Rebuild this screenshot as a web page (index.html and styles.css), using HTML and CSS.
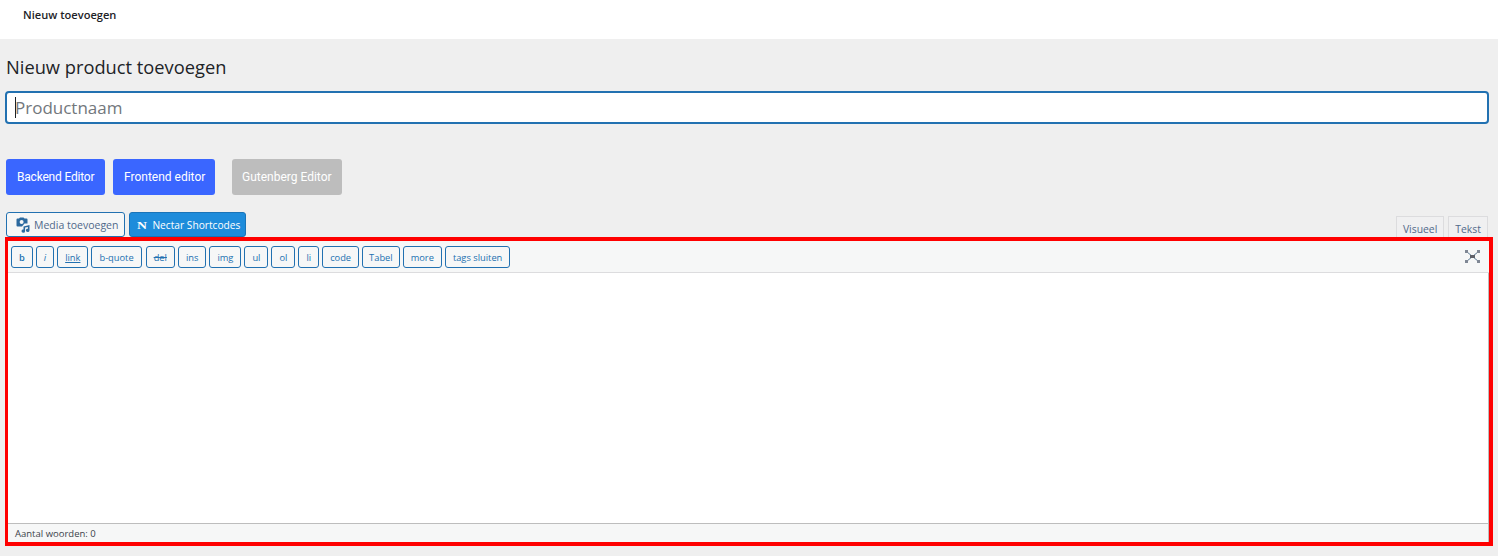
FILE: index.html
```html
<!DOCTYPE html>
<html lang="en">
  <head>
    <meta charset="UTF-8" />
    <title>Nieuw product toevoegen</title>
    <link rel="stylesheet" href="styles.css">
  </head>
  <body>
    <div class="topbar">Nieuw toevoegen</div>
    <div class="wrap">
      <h1 class="page-title">Nieuw product toevoegen</h1>
      <div class="title-input"><span class="caret"></span>Productnaam</div>

      <div class="builder-buttons">
        <a class="builder-btn builder-btn-back">Backend Editor</a>
        <a class="builder-btn builder-btn-front">Frontend editor</a>
        <a class="builder-btn builder-btn-off">Gutenberg Editor</a>
      </div>

      <div class="editor-tools">
        <div class="media-buttons">
          <a class="media-btn">
            <svg class="media-icon" width="16" height="16" viewBox="0 0 16 16">
              <path d="M2.5 1.5h1.5l1-1h3.5l1 1h2a1 1 0 0 1 1 1v4H9.5L7 9.5H2.5a1 1 0 0 1-1-1v-6a1 1 0 0 1 1-1z" fill="#2c6a9f"/>
              <circle cx="6.6" cy="5" r="2" fill="#f6f7f7"/>
              <path d="M8.5 9.5l6-1.5v5.4a1.8 1.6 0 1 1-1.6-1.6V9.9l-2.8.7v3.6a1.8 1.6 0 1 1-1.6-1.6z" fill="#2c6a9f"/>
            </svg>
            Media toevoegen
          </a>
          <a class="media-btn media-btn-nectar"><span class="nectar-n">N</span>Nectar Shortcodes</a>
        </div>
        <div class="editor-tabs">
          <a class="editor-tab">Visueel</a>
          <a class="editor-tab">Tekst</a>
        </div>
      </div>

      <div class="editor-frame">
        <div class="quicktags">
          <a class="qt qt-bold">b</a>
          <a class="qt qt-italic">i</a>
          <a class="qt qt-link">link</a>
          <a class="qt">b-quote</a>
          <a class="qt qt-del">del</a>
          <a class="qt">ins</a>
          <a class="qt">img</a>
          <a class="qt">ul</a>
          <a class="qt">ol</a>
          <a class="qt">li</a>
          <a class="qt">code</a>
          <a class="qt qt-table">Tabel</a>
          <a class="qt">more</a>
          <a class="qt">tags sluiten</a>
          <svg class="fullscreen" width="15" height="13" viewBox="0 0 15 13">
            <path d="M1.5 1.5L13.5 11.5M13.5 1.5L1.5 11.5" stroke="#5b7a94" stroke-width="1"/>
            <rect x="0" y="0" width="3" height="3" fill="#7f8794"/>
            <rect x="12" y="0" width="3" height="3" fill="#7f8794"/>
            <rect x="0" y="10" width="3" height="3" fill="#7f8794"/>
            <rect x="12" y="10" width="3" height="3" fill="#7f8794"/>
            <rect x="5" y="5" width="5" height="3" fill="#5f6169"/>
          </svg>
        </div>
        <div class="editor-area"></div>
        <div class="status-bar">Aantal woorden: 0</div>
      </div>
    </div>
  </body>
</html>
```

FILE: styles.css
```css
body {
  margin: 0;
  background: #efefef;
  font-family: "Open Sans", "Noto Sans", sans-serif;
  color: #1d2327;
}
a {
  display: block;
  text-decoration: none;
}

.topbar {
  height: 39px;
  padding: 7px 0 0 23px;
  box-sizing: border-box;
  background: #fff;
  font-size: 11.1px;
  font-weight: 600;
  line-height: 15px;
  color: #1d2327;
}

.wrap {
  padding: 0 5px;
}

.page-title {
  margin: 0;
  padding: 16px 0 0 1px;
  height: 52px;
  box-sizing: border-box;
  font-size: 18.3px;
  font-weight: 400;
  line-height: 24px;
}

.title-input {
  display: flex;
  align-items: center;
  height: 33px;
  width: 1484px;
  box-sizing: border-box;
  padding-left: 8px;
  background: #fff;
  border: 2px solid #2271b1;
  border-radius: 4px;
  font-size: 17px;
  color: #72777c;
}
.caret {
  width: 1px;
  height: 21px;
  margin-right: -1px;
  background: #1d2327;
}

.builder-buttons {
  display: flex;
  margin: 35px 0 0 1px;
}
.builder-btn {
  display: flex;
  align-items: center;
  height: 36px;
  padding: 0 11px;
  margin-right: 8px;
  background: #3a66ff;
  border-radius: 3px;
  font-family: Roboto, sans-serif;
  font-size: 12px;
  white-space: nowrap;
  color: #fff;
}
.builder-btn-back {
  width: 99px;
  box-sizing: border-box;
  letter-spacing: -0.2px;
}
.builder-btn-front {
  width: 102px;
  box-sizing: border-box;
}
.builder-btn-off {
  margin-left: 9px;
  padding: 0 10px;
  background: #bdbdbd;
}

.editor-tools {
  display: flex;
  justify-content: space-between;
  align-items: flex-end;
  height: 25px;
  margin: 17px 0 0 1px;
}
.media-buttons {
  display: flex;
  gap: 4px;
}
.media-btn {
  display: flex;
  align-items: center;
  height: 25px;
  box-sizing: border-box;
  padding: 0 6px 0 8px;
  background: #f6f7f7;
  border: 1px solid #2271b1;
  border-radius: 3px;
  font-size: 10.5px;
  color: #50698a;
}
.media-icon {
  margin-right: 3px;
}
.media-btn-nectar {
  padding-right: 5px;
  background: #1e8cdb;
  border-color: #1a74b8;
  font-size: 10.2px;
  color: #fff;
}
.nectar-n {
  width: 10px;
  margin: 0 5px 0 -1px;
  font-family: "Liberation Serif", serif;
  font-size: 11px;
  font-weight: 700;
  text-align: center;
  transform: scaleX(1.25);
}

.editor-tabs {
  display: flex;
  gap: 4px;
  margin: 0 5px -4px 0;
}
.editor-tab {
  padding: 0 6px;
  height: 25px;
  box-sizing: border-box;
  background: #f0f0f1;
  border: 1px solid #dcdcde;
  border-bottom: 0;
  font-size: 10.4px;
  line-height: 24px;
  color: #50698a;
}

.editor-frame {
  position: relative;
  width: 1488px;
  height: 309px;
  box-sizing: border-box;
  display: flex;
  flex-direction: column;
  border: 4px solid #f00;
  border-left-width: 3px;
  background: #f6f7f7;
}

.quicktags {
  display: flex;
  align-items: center;
  flex: none;
  height: 32px;
  box-sizing: border-box;
  padding: 1px 9px 0 3px;
  gap: 3px;
  border-bottom: 1px solid #dcdcde;
}
.qt {
  height: 22px;
  box-sizing: border-box;
  padding: 0 7px;
  background: #f6f7f7;
  border: 1px solid #2271b1;
  border-radius: 3px;
  font-size: 9.3px;
  line-height: 21px;
  color: #2271b1;
}
.qt-bold {
  font-weight: 600;
}
.qt-italic {
  font-style: italic;
}
.qt-link {
  text-decoration: underline;
}
.qt-del {
  margin-left: 1px;
  text-decoration: line-through;
}
.qt-table {
  padding: 0 6px;
}
.fullscreen {
  margin: 0 0 2px auto;
}

.editor-area {
  flex: 1;
  background: #fff;
  border-right: 1px solid #bdbdbd;
}

.status-bar {
  flex: none;
  height: 19px;
  box-sizing: border-box;
  padding: 1px 0 0 7px;
  border-top: 1px solid #bdbdbd;
  border-right: 1px solid #bdbdbd;
  font-size: 9.5px;
  line-height: 17px;
  color: #3c434a;
}
```
